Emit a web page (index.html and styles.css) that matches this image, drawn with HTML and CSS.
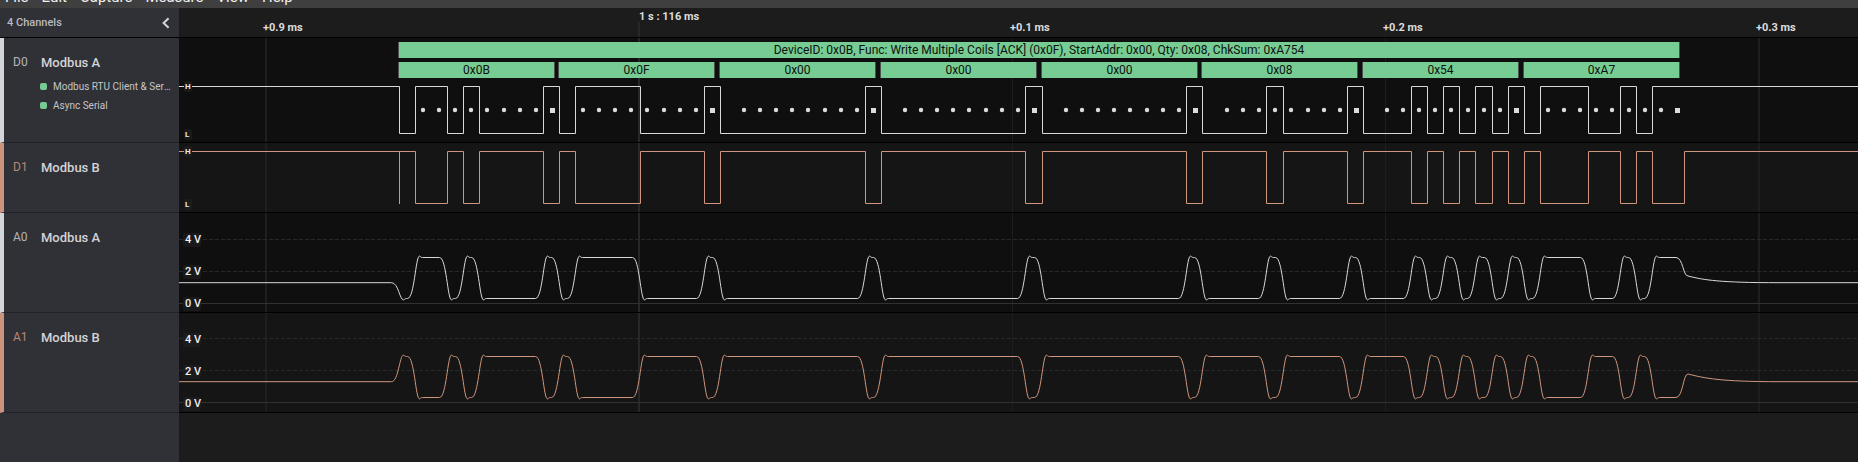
FILE: index.html
```html
<!DOCTYPE html>
<html lang="en">
<head>
<meta charset="utf-8">
<title>Logic Analyzer</title>
<link rel="stylesheet" href="styles.css">
</head>
<body>
<div class="app">
  <nav class="menubar">
    <button class="menu" type="button">File</button>
    <button class="menu" type="button">Edit</button>
    <button class="menu" type="button">Capture</button>
    <button class="menu" type="button">Measure</button>
    <button class="menu" type="button">View</button>
    <button class="menu" type="button">Help</button>
  </nav>

  <header class="row row-head">
    <div class="side side-head">
      <span class="count">4 Channels</span>
      <button class="collapse" type="button" aria-label="Collapse channels">
        <svg width="10" height="12" viewBox="0 0 10 12"><path d="M7.6 1.2 2.6 6l5 4.8" fill="none" stroke="currentColor" stroke-width="2"/></svg>
      </button>
    </div>
    <svg class="plot ruler" data-kind="ruler">
      <text x="84" y="23">+0.9 ms</text>
      <text x="460" y="12">1 s : 116 ms</text>
      <text x="831" y="23">+0.1 ms</text>
      <text x="1204" y="23">+0.2 ms</text>
      <text x="1577" y="23">+0.3 ms</text>
    </svg>
  </header>

  <section class="row row-d0 light">
    <div class="side channel">
      <div class="title"><span class="id">D0</span><span class="name">Modbus A</span></div>
      <ul class="analyzers">
        <li><span>Modbus RTU Client &amp; Server</span></li>
        <li><span>Async Serial</span></li>
      </ul>
    </div>
    <div class="plot">
      <svg class="trace" data-kind="d0">
        <rect class="chip" x="5" y="43" width="8" height="11" rx="2"/>
        <rect class="chip" x="5" y="91" width="8" height="11" rx="2"/>
        <text class="level" x="6" y="51">H</text>
        <text class="level" x="6" y="99">L</text>
      </svg>
      <div class="frames">
        <span class="frame message" style="left:219px;width:1282px">DeviceID: 0x0B, Func: Write Multiple Coils [ACK] (0x0F), StartAddr: 0x00, Qty: 0x08, ChkSum: 0xA754</span>
        <span class="frame" style="left:219px;width:157px">0x0B</span>
        <span class="frame" style="left:379px;width:157px">0x0F</span>
        <span class="frame" style="left:540px;width:157px">0x00</span>
        <span class="frame" style="left:701px;width:157px">0x00</span>
        <span class="frame" style="left:862px;width:157px">0x00</span>
        <span class="frame" style="left:1022px;width:157px">0x08</span>
        <span class="frame" style="left:1183px;width:157px">0x54</span>
        <span class="frame" style="left:1344px;width:157px">0xA7</span>
      </div>
    </div>
  </section>

  <section class="row row-d1 copper">
    <div class="side channel">
      <div class="title"><span class="id">D1</span><span class="name">Modbus B</span></div>
    </div>
    <div class="plot">
      <svg class="trace" data-kind="d1">
        <rect class="chip" x="5" y="3" width="8" height="11" rx="2"/>
        <rect class="chip" x="5" y="56" width="8" height="11" rx="2"/>
        <text class="level" x="6" y="11">H</text>
        <text class="level" x="6" y="64">L</text>
      </svg>
    </div>
  </section>

  <section class="row row-analog light">
    <div class="side channel">
      <div class="title"><span class="id">A0</span><span class="name">Modbus A</span></div>
    </div>
    <div class="plot">
      <svg class="trace" data-kind="a0">
        <text class="volt" x="6" y="30">4 V</text>
        <text class="volt" x="6" y="62">2 V</text>
        <text class="volt" x="6" y="94">0 V</text>
      </svg>
    </div>
  </section>

  <section class="row row-analog copper">
    <div class="side channel">
      <div class="title"><span class="id">A1</span><span class="name">Modbus B</span></div>
    </div>
    <div class="plot">
      <svg class="trace" data-kind="a1">
        <text class="volt" x="6" y="30">4 V</text>
        <text class="volt" x="6" y="62">2 V</text>
        <text class="volt" x="6" y="94">0 V</text>
      </svg>
    </div>
  </section>

  <div class="rest"><div class="side"></div></div>
</div>
<script src="traces.js"></script>
</body>
</html>
```
FILE: styles.css
```css
* { box-sizing: border-box; }
html, body { height: 100%; }
body {
  margin: 0;
  background: #1c1c1c;
  color: #d3d3d8;
  font-family: Roboto, "Liberation Sans", sans-serif;
  font-size: 12px;
  overflow: hidden;
}
button { border: 0; padding: 0; background: none; color: inherit; font: inherit; }
.app { display: flex; flex-direction: column; min-height: 100vh; }

.menubar {
  display: flex;
  align-items: flex-end;
  gap: 13px;
  height: 8px;
  padding: 0 5px;
  background: #3f3f3f;
  overflow: hidden;
}
.menu { flex: none; height: 19px; padding-bottom: 3px; font-size: 15px; line-height: 16px; color: #f0f0f0; }

.row { display: flex; }
.side { flex: none; width: 179px; background: #303136; }
.plot { position: relative; flex: 1; min-width: 0; overflow: hidden; border-bottom: 1px solid #000; }

.row-head { height: 30px; }
.side-head {
  display: flex;
  align-items: center;
  justify-content: space-between;
  padding: 0 8px 0 7px;
  border-bottom: 1px solid #000;
  color: #b9babf;
}
.count { font-size: 11px; font-weight: 500; }
.collapse { display: flex; color: #d3d3d8; }
.ruler { display: block; height: 30px; }
.ruler text { fill: #dcdcdc; font-size: 11px; font-weight: 700; }

.row-d0 { height: 105px; }
.row-d1 { height: 70px; }
.row-analog { height: 100px; }
.light { --accent: #d3d4d8; --wave: #d8d8d8; }
.copper { --accent: #c9937e; --wave: #cf967d; }
.light .plot { background: #0f0f0f; --chip: #191919; }
.copper .plot { background: #151515; --chip: #1c1c1c; }

.channel {
  padding: 17px 5px 0 9px;
  border-left: 4px solid var(--accent);
  border-bottom: 1px solid #222326;
}
.title { display: flex; align-items: center; height: 14px; }
.id { width: 28px; font-size: 12px; color: #b4b5ba; }
.copper .id { color: #b98774; }
.name { font-size: 13px; font-weight: 500; }
.analyzers { margin: 8px 0 0; padding: 0 0 0 27px; list-style: none; }
.analyzers li { display: flex; align-items: center; gap: 6px; height: 19px; font-size: 10px; color: #c4c5c9; }
.analyzers li::before { content: ""; flex: none; width: 7px; height: 7px; border-radius: 2px; background: #77cc93; }
.analyzers span { overflow: hidden; white-space: nowrap; text-overflow: ellipsis; }

.trace { display: block; width: 100%; height: 100%; }
.grid { fill: #1e1e1e; }
.grid-major { fill: #272729; }
.zero { stroke: #303134; }
.minor { stroke: #27282a; stroke-dasharray: 4 2; }
.wave { fill: none; stroke: var(--wave); }
.bit { fill: #dcdcdc; }
.chip { fill: var(--chip); }
.level { fill: #e8e8e8; font-size: 8px; font-weight: 700; }
.volt { fill: #f0f0f0; font-size: 11px; font-weight: 500; }

.frame {
  position: absolute;
  top: 24px;
  height: 16px;
  border: solid #4a524d;
  border-width: 0 1px;
  background: #77cc93;
  color: #0b130e;
  font-size: 12px;
  line-height: 16px;
  text-align: center;
  white-space: nowrap;
  overflow: hidden;
}
.message { top: 4px; }

.rest { display: flex; flex: 1; }
```
FILE: traces.js
```js
const NS = 'http://www.w3.org/2000/svg';

// Bus edges in plot pixels; the line idles high and toggles at each edge.
const edges = [220, 236, 268, 284, 300, 364, 380, 396, 461, 525, 541, 686, 702, 846, 863,
  1007, 1023, 1087, 1104, 1168, 1184, 1232, 1248, 1264, 1280, 1296, 1313, 1329, 1345,
  1361, 1409, 1441, 1457, 1473];
const release = 1505;
const frameStarts = [220, 380, 541, 702, 863, 1024, 1184, 1345];
const gridLines = [
  { x: 86, width: 2 },
  { x: 459, width: 2, major: true },
  { x: 833, width: 1 },
  { x: 1206, width: 1 },
  { x: 1579, width: 2 },
];

function add(svg, tag, attrs, first) {
  const el = document.createElementNS(NS, tag);
  for (const key in attrs) el.setAttribute(key, attrs[key]);
  svg.insertBefore(el, first || null);
}

function digital(list, high, low, startHigh) {
  let up = startHigh;
  let d = 'M0 ' + high;
  for (const x of list) {
    up = !up;
    d += 'H' + (x + 0.5) + 'V' + (up ? high : low);
  }
  return d + 'H8000';
}

function analog(idle, first, second, tailY) {
  const over = Math.sign(first - second) * 1.4;
  let y = idle;
  let d = 'M0 ' + idle;
  edges.forEach((x, i) => {
    const t = x + 0.5;
    const to = i % 2 ? second : first;
    const peak = to + (i % 2 ? -over : over);
    d += `L${t - 8} ${y}C${t - 1} ${y} ${t} ${peak} ${t + 4} ${peak}C${t + 5} ${peak} ${t + 5} ${to} ${t + 7} ${to}`;
    y = to;
  });
  d += `L${release - 8} ${y}C${release - 1} ${y} ${release - 1} ${tailY} ${release + 4} ${tailY}`;
  d += `C${release + 20} ${tailY + 4} ${release + 35} ${idle} ${release + 95} ${idle}H8000`;
  return d;
}

document.querySelectorAll('svg[data-kind]').forEach(svg => {
  const kind = svg.dataset.kind;
  const first = svg.firstChild;
  gridLines.forEach(({ x, width, major }) => {
    const y = kind === 'ruler' ? (major ? 14 : 25) : 0;
    add(svg, 'rect', { class: major ? 'grid-major' : 'grid', x, y, width, height: 120 }, first);
  });
  if (kind === 'd0') {
    add(svg, 'path', { class: 'wave', d: digital(edges, 48.5, 95.5, true) }, first);
    frameStarts.forEach(s => {
      for (let i = 0; i < 8; i++) {
        const cx = Math.round(s + 24 + 16.1 * i);
        add(svg, 'circle', { class: 'bit', cx, cy: 72, r: 2.2 });
      }
      add(svg, 'rect', { class: 'bit', x: s + 151, y: 70, width: 5, height: 5 });
    });
  }
  if (kind === 'd1') {
    const d = 'M220.5 8V61' + digital([...edges.slice(1), release], 8.5, 60.5, true);
    add(svg, 'path', { class: 'wave', d }, first);
  }
  if (kind === 'a0' || kind === 'a1') {
    const top = kind === 'a0' ? 26.5 : 25.5;
    add(svg, 'line', { class: 'minor', x1: 0, x2: '100%', y1: top, y2: top }, first);
    add(svg, 'line', { class: 'minor', x1: 0, x2: '100%', y1: top + 32, y2: top + 32 }, first);
    add(svg, 'line', { class: 'zero', x1: 0, x2: '100%', y1: top + 64, y2: top + 64 }, first);
    [17, 49, 81].forEach(y => add(svg, 'rect', { class: 'chip', x: 4, y: y + 3, width: 18, height: 14, rx: 2 }, first));
    const d = kind === 'a0' ? analog(69.7, 85.5, 44.5, 63) : analog(68.7, 43.5, 84.5, 61);
    add(svg, 'path', { class: 'wave', d }, first);
  }
});
```
